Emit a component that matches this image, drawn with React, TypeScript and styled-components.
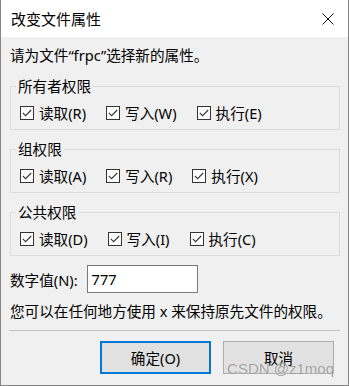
import React from "react";
import styled, { createGlobalStyle } from "styled-components";

const GlobalStyle = createGlobalStyle`
  html, body {
    margin: 0;
    padding: 0;
    background: #ffffff;
  }
  * {
    box-sizing: border-box;
  }
`;

const FONT = `"Noto Sans", "Noto Sans CJK SC", sans-serif`;

const Window = styled.div`
  position: relative;
  width: 349px;
  height: 386px;
  display: flex;
  flex-direction: column;
  border: 1px solid #858585;
  border-top: none;
  background: #f0f0f0;
  font-family: ${FONT};
  font-size: 14.6px;
  color: #000;
  overflow: hidden;
`;

const TitleBar = styled.div`
  height: 37px;
  flex: none;
  display: flex;
  align-items: center;
  justify-content: space-between;
  padding: 0 14px 0 10px;
  background: #ffffff;
`;

const Title = styled.span`
  font-size: 15px;
  line-height: 20px;
`;

const CloseButton = styled.span`
  display: flex;
  width: 12px;
  height: 12px;
`;

const Body = styled.div`
  flex: 1;
  display: flex;
  flex-direction: column;
  padding: 8px 8px 0 9px;
`;

const Line = styled.div<{ $top?: number }>`
  line-height: 20px;
  white-space: nowrap;
  margin-top: ${(p) => p.$top ?? 0}px;
`;

const Group = styled.fieldset<{ $top: number }>`
  margin: ${(p) => p.$top}px 0 0;
  border: 1px solid #dcdcdc;
  padding: 7px 9px 6px;
  min-width: 0;
`;

const Legend = styled.legend`
  padding: 0 2px;
  margin-left: -4px;
  line-height: 19px;
`;

const CheckRow = styled.div`
  display: flex;
  align-items: center;
  gap: 20px;
  height: 20px;
`;

const CheckItem = styled.label`
  display: flex;
  align-items: center;
  gap: 5px;
  line-height: 20px;
  white-space: nowrap;
`;

const Box = styled.span`
  width: 14px;
  height: 14px;
  display: flex;
  align-items: center;
  justify-content: center;
  border: 1px solid #333333;
  background: #ffffff;
`;

const NumberRow = styled.div`
  display: flex;
  align-items: center;
  gap: 9px;
  margin-top: 9px;
`;

const NumberInput = styled.div`
  width: 111px;
  height: 28px;
  display: flex;
  align-items: center;
  padding-left: 4px;
  border: 1px solid #7a7a7a;
  background: #ffffff;
`;

const Separator = styled.div`
  margin-top: 9px;
  margin-left: -1px;
  border-top: 1px solid #c4c4c4;
`;

const ButtonRow = styled.div`
  display: flex;
  justify-content: flex-end;
  gap: 12px;
  padding-right: 6px;
  margin-top: 10px;
`;

const Button = styled.div<{ $primary?: boolean }>`
  width: 111px;
  height: 33px;
  display: flex;
  align-items: center;
  justify-content: center;
  background: #e1e1e1;
  border: ${(p) => (p.$primary ? "2px solid #0078d7" : "1px solid #adadad")};
  line-height: 20px;
`;

const Watermark = styled.span`
  position: absolute;
  right: 14px;
  bottom: 8px;
  font-family: "Liberation Sans", sans-serif;
  font-size: 15px;
  color: rgba(135, 135, 135, 0.8);
  text-shadow: 0 0 1px #fff;
  pointer-events: none;
`;

const CheckMark = () => (
  <svg width="10" height="8" viewBox="0 0 10 8">
    <polyline
      points="0.8,3.8 3.6,6.6 9.2,1"
      fill="none"
      stroke="#333"
      strokeWidth="1.1"
    />
  </svg>
);

const Check: React.FC<{ label: string }> = ({ label }) => (
  <CheckItem>
    <Box>
      <CheckMark />
    </Box>
    {label}
  </CheckItem>
);

const groups = [
  { title: "所有者权限", items: ["读取(R)", "写入(W)", "执行(E)"], top: 12 },
  { title: "组权限", items: ["读取(A)", "写入(R)", "执行(X)"], top: 10 },
  { title: "公共权限", items: ["读取(D)", "写入(I)", "执行(C)"], top: 10 },
];

const App: React.FC = () => {
  return (
    <>
      <GlobalStyle />
      <Window>
        <TitleBar>
          <Title>改变文件属性</Title>
          <CloseButton>
            <svg width="12" height="12" viewBox="0 0 12 12">
              <path d="M0.5 0.5 L11.5 11.5 M11.5 0.5 L0.5 11.5" stroke="#111" strokeWidth="1" />
            </svg>
          </CloseButton>
        </TitleBar>
        <Body>
          <Line>请为文件“frpc”选择新的属性。</Line>
          {groups.map((g) => (
            <Group key={g.title} $top={g.top}>
              <Legend>{g.title}</Legend>
              <CheckRow>
                {g.items.map((it) => (
                  <Check key={it} label={it} />
                ))}
              </CheckRow>
            </Group>
          ))}
          <NumberRow>
            <span>数字值(N):</span>
            <NumberInput>777</NumberInput>
          </NumberRow>
          <Line $top={8}>您可以在任何地方使用 x 来保持原先文件的权限。</Line>
          <Separator />
          <ButtonRow>
            <Button $primary>确定(O)</Button>
            <Button>取消</Button>
          </ButtonRow>
        </Body>
        <Watermark>CSDN @z1moq</Watermark>
      </Window>
    </>
  );
};

export default App;
